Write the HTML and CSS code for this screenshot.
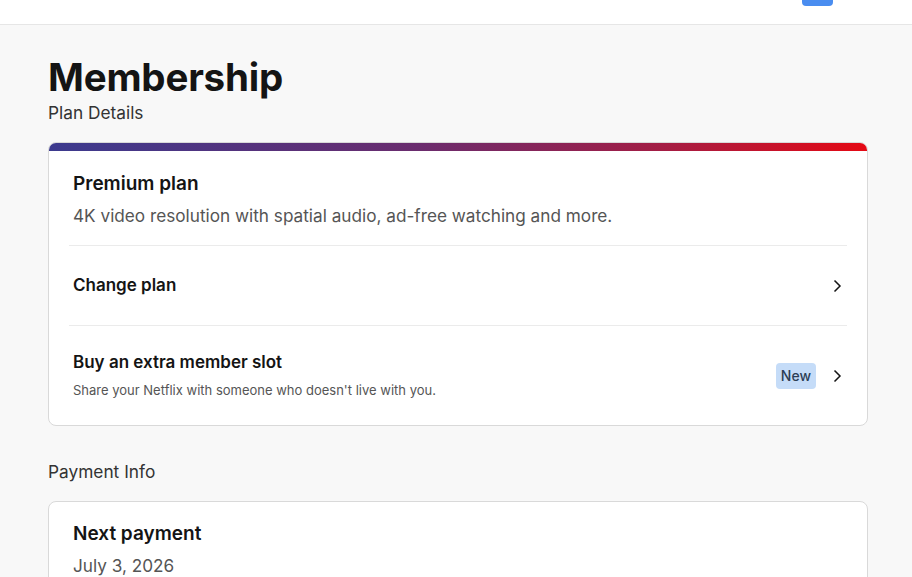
FILE: index.html
```html
<!DOCTYPE html>
<html>
<head>
<meta charset="utf-8">
<link rel="stylesheet" href="styles.css">
</head>
<body>
<header class="topbar">
  <span class="top-btn"></span>
</header>
<main class="page">
  <h1 class="title">Membership</h1>
  <h2 class="section-label">Plan Details</h2>
  <section class="card plan-card">
    <div class="card-accent"></div>
    <div class="plan-info">
      <h3 class="plan-name">Premium plan</h3>
      <p class="plan-desc">4K video resolution with spatial audio, ad-free watching and more.</p>
    </div>
    <div class="row">
      <span class="row-title">Change plan</span>
      <svg class="chev" viewBox="0 0 16 16" width="16" height="16"><path d="M5.5 2.5 11 8l-5.5 5.5" fill="none" stroke="#141414" stroke-width="1.5"/></svg>
    </div>
    <div class="row row-tall">
      <div class="row-text">
        <span class="row-title">Buy an extra member slot</span>
        <span class="row-sub">Share your Netflix with someone who doesn't live with you.</span>
      </div>
      <span class="badge">New</span>
      <svg class="chev" viewBox="0 0 16 16" width="16" height="16"><path d="M5.5 2.5 11 8l-5.5 5.5" fill="none" stroke="#141414" stroke-width="1.5"/></svg>
    </div>
  </section>
  <h2 class="section-label payment-label">Payment Info</h2>
  <section class="card pay-card">
    <h3 class="plan-name">Next payment</h3>
    <p class="plan-desc">July 3, 2026</p>
  </section>
</main>
</body>
</html>
```
FILE: styles.css
```css
* { box-sizing: border-box; }
html, body { margin: 0; padding: 0; }
body {
  background: #f8f8f8;
  font-family: Inter, "Noto Sans", sans-serif;
  color: #141414;
  height: 577px;
  overflow: hidden;
}
.topbar {
  height: 25px;
  background: #fff;
  border-bottom: 1px solid #e6e6e6;
  display: flex;
  justify-content: flex-end;
  padding-right: 79px;
}
.top-btn {
  width: 31px;
  height: 6px;
  background: #4a8df0;
  border-radius: 0 0 4px 4px;
}
.page {
  width: 820px;
  margin-left: 48px;
}
.title {
  margin: 30px 0 0;
  font-size: 38.5px;
  font-weight: 700;
  line-height: 44px;
  letter-spacing: -0.2px;
}
.section-label {
  margin: 2px 0 0;
  font-size: 17.3px;
  font-weight: 400;
  line-height: 24px;
  color: #333;
}
.card {
  background: #fff;
  border: 1px solid #d9d9d9;
  border-radius: 8px;
  overflow: hidden;
}
.plan-card { margin-top: 17px; }
.card-accent {
  height: 8px;
  background: linear-gradient(90deg, #3c3a8e 0%, #6a2c6e 45%, #a41d44 75%, #e50914 100%);
}
.plan-info {
  padding: 20px 24px 17px 4px;
  margin: 0 20px;
  border-bottom: 1px solid #ebebeb;
}
.plan-name {
  margin: 0;
  font-size: 19px;
  font-weight: 600;
  line-height: 26px;
}
.plan-desc {
  margin: 7px 0 0;
  font-size: 17.2px;
  line-height: 24px;
  color: #555;
}
.row {
  display: flex;
  align-items: center;
  margin: 0 20px;
  padding: 0 4px;
  height: 80px;
  border-bottom: 1px solid #ebebeb;
}
.row-tall {
  height: 99px;
  border-bottom: none;
}
.row .row-title {
  font-size: 17px;
  font-weight: 600;
  line-height: 24px;
  flex: 1;
  margin-top: -1px;
}
.row-text {
  flex: 1;
  display: flex;
  flex-direction: column;
  gap: 6px;
  margin-top: 0;
}
.row-sub {
  font-size: 13px;
  color: #555;
  line-height: 20px;
}
.badge {
  background: #c5dcf8;
  color: #2c3e55;
  font-size: 14px;
  font-weight: 500;
  padding: 4px 5px;
  border-radius: 4px;
  line-height: 18px;
  margin-right: 13px;
}
.chev { flex: none; margin-right: -2px; }
.payment-label { margin-top: 34px; }
.pay-card {
  margin-top: 17px;
  padding: 19px 24px;
  height: 120px;
}
```
